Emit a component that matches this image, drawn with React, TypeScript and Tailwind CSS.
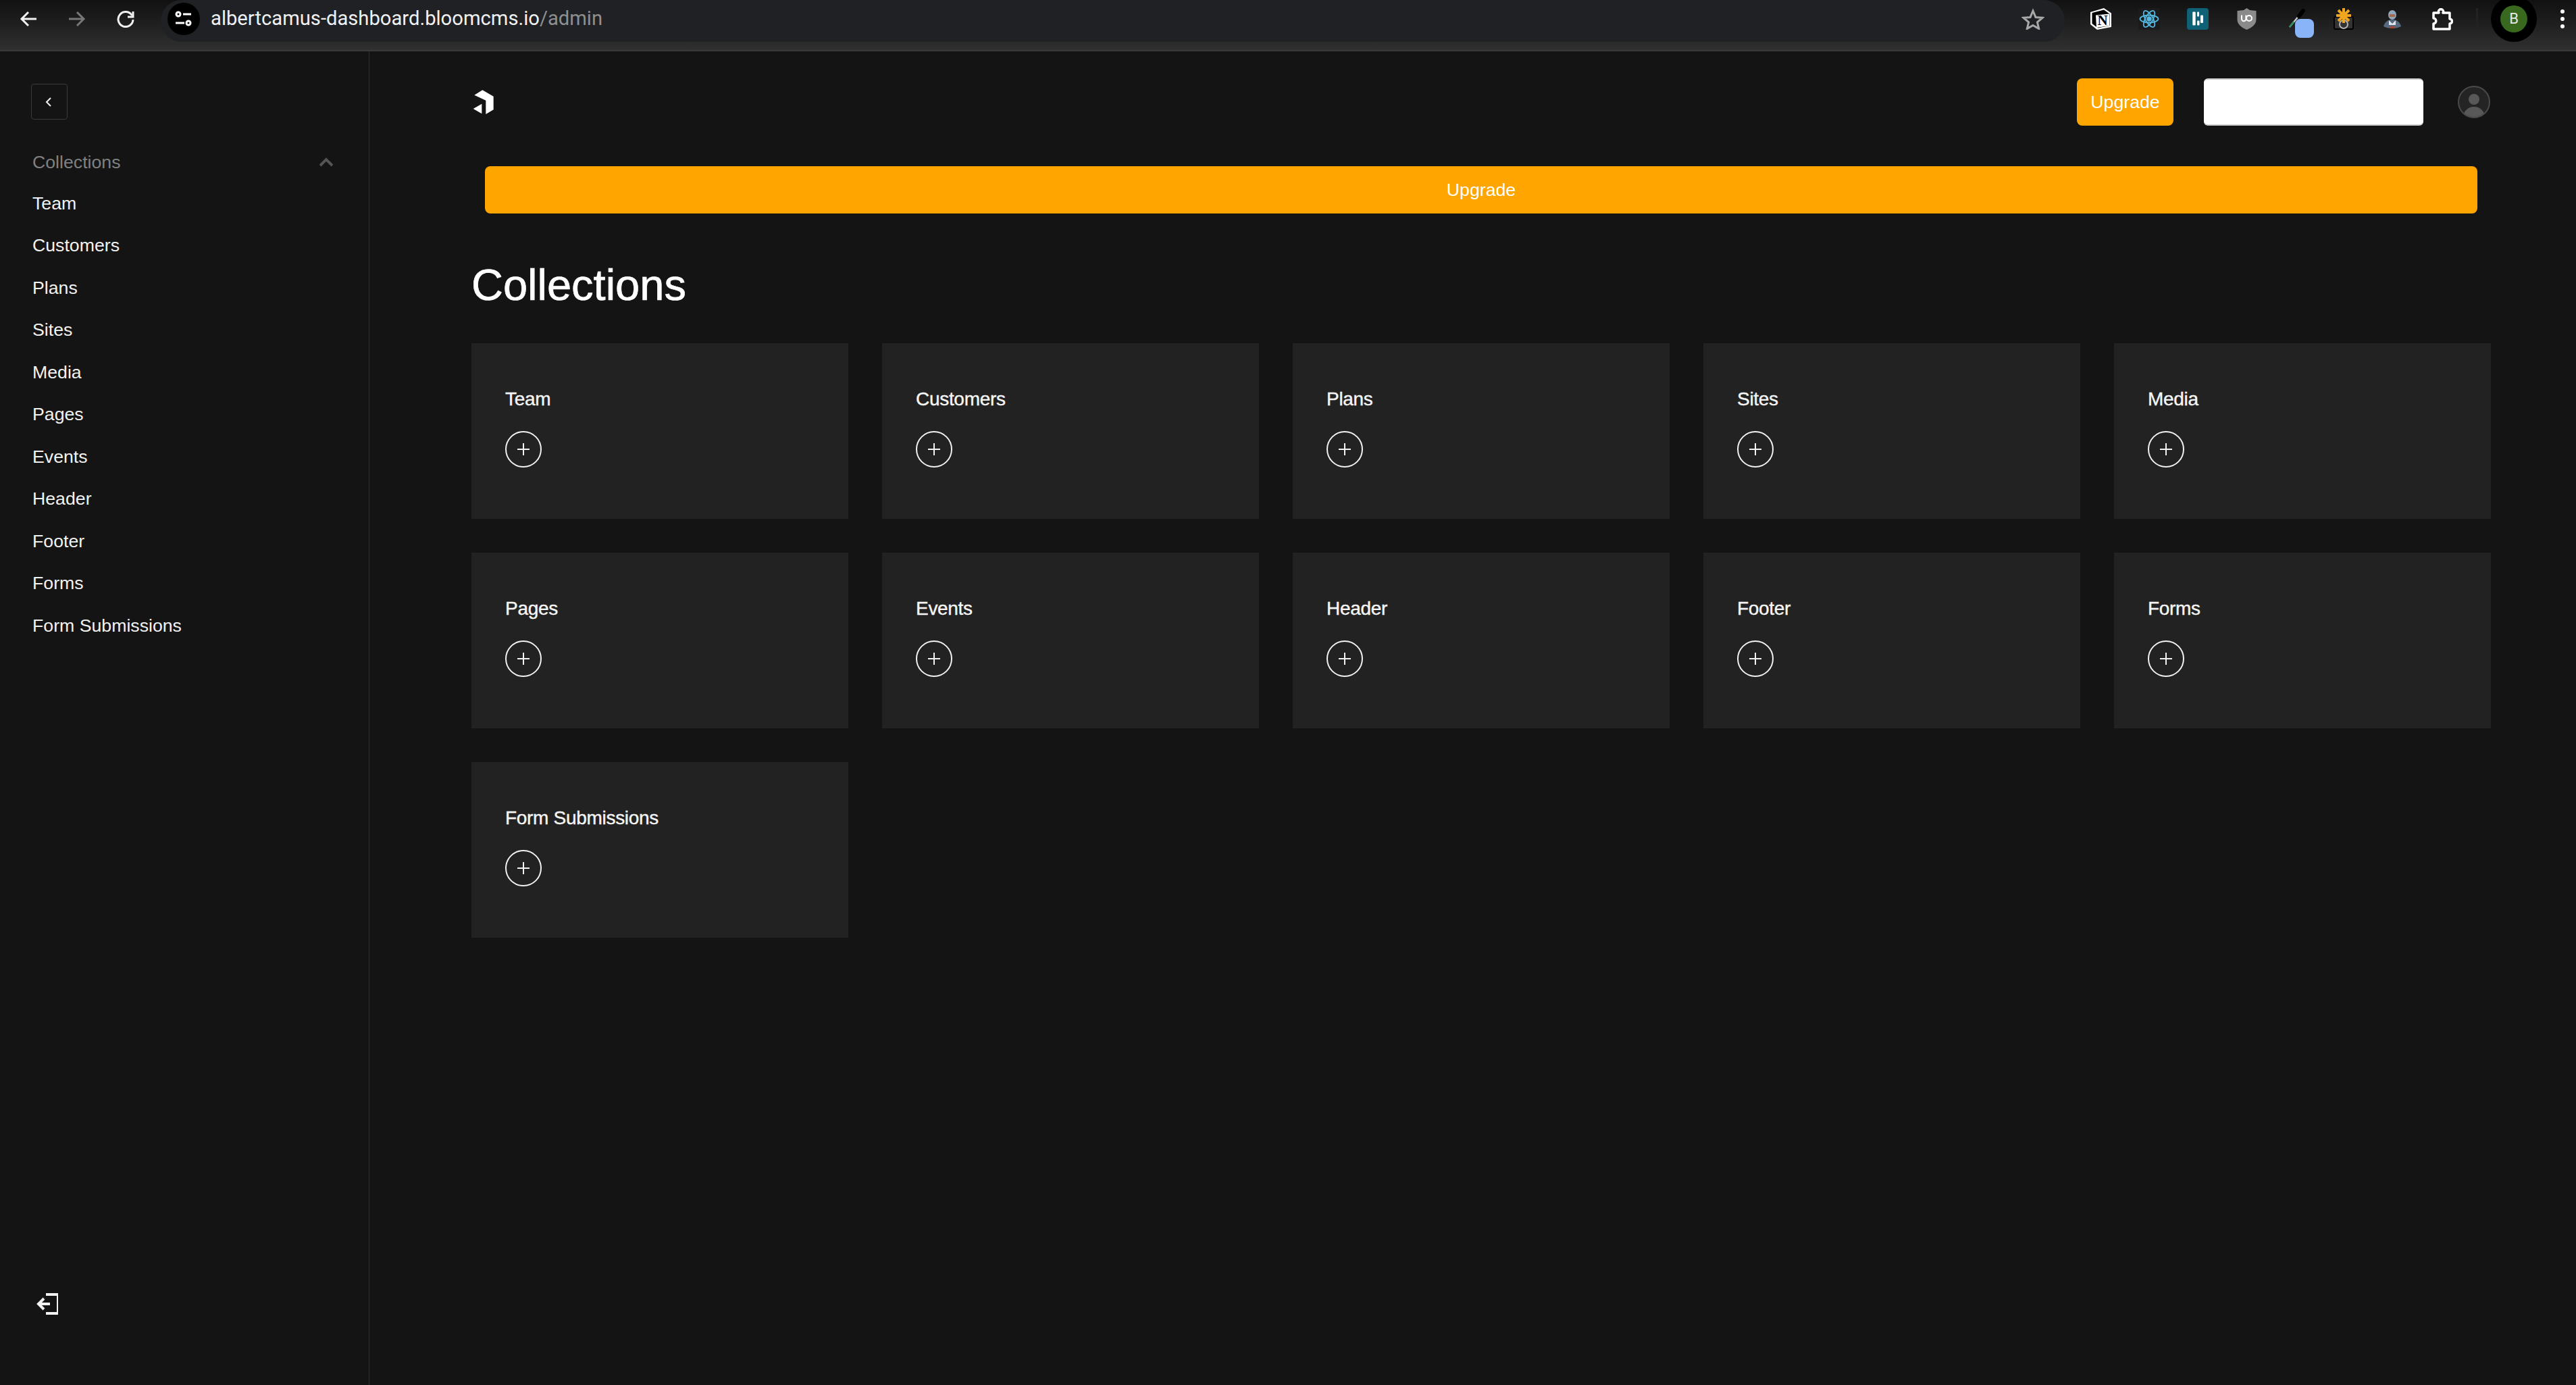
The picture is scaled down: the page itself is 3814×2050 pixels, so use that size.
import React from 'react';

const collections = ['Team', 'Customers', 'Plans', 'Sites', 'Media', 'Pages', 'Events', 'Header', 'Footer', 'Forms', 'Form Submissions'];

const BrowserBar = () => (
  <div className="flex h-[76px] items-start border-b-2 border-[#3a3a3a] bg-gradient-to-b from-[#111111] to-[#303030] font-['Roboto',sans-serif]">
    <div className="flex h-[62px] w-[238px] shrink-0 items-center pb-[6px]">
      <svg className="ml-[29px] h-[26px] w-[26px]" viewBox="0 0 26 26" fill="none" stroke="#f1f1f1" strokeWidth="3">
        <path d="M25 13H3M13 3 3 13l10 10" />
      </svg>
      <svg className="ml-[46px] h-[26px] w-[26px]" viewBox="0 0 26 26" fill="none" stroke="#777777" strokeWidth="3">
        <path d="M1 13h22M13 3l10 10-10 10" />
      </svg>
      <svg className="ml-[46px] h-[26px] w-[26px]" viewBox="0 0 26 26" fill="none" stroke="#f1f1f1" strokeWidth="3">
        <path d="M22.5 8A11 11 0 1 0 24 14" />
        <path d="M24 2v8h-8" strokeLinejoin="miter" />
      </svg>
    </div>
    <div className="flex h-[62px] w-[2819px] shrink-0 items-center rounded-full bg-[#1f2125] pb-[6px] pl-[10px] pr-[30px]">
      <div className="mt-[6px] flex h-[48px] w-[48px] -translate-y-[3px] items-center justify-center rounded-full bg-black">
        <svg className="h-[24px] w-[26px]" viewBox="0 0 26 24" fill="none" stroke="#ffffff" strokeWidth="3">
          <circle cx="5" cy="5" r="3" />
          <path d="M12 5h12M1 18h13" />
          <circle cx="20" cy="18" r="3" />
        </svg>
      </div>
      <div className="ml-[16px] text-[29.200px] leading-none text-[#f1f1f1]">
        albertcamus-dashboard.bloomcms.io<span className="text-[#8f8f8f]">/admin</span>
      </div>
      <svg className="ml-auto h-[32px] w-[34px]" viewBox="0 0 34 32" fill="none" stroke="#a8a8a8" strokeWidth="3">
        <path d="M17 4l4 9.5 10 .8-7.600 6.500 2.300 9.700L17 25.400 8.300 30.500l2.300-9.700L3 14.300l10-.8z" />
      </svg>
    </div>
    <div className="flex h-[62px] flex-1 items-center pb-[6px]">
      <svg className="ml-[38px] h-[32px] w-[31px]" viewBox="0 0 31 32">
        <path d="M0 6 20 0l11 7.500V28L10 32 0 24z" fill="#ffffff" />
        <path d="M2.500 7 20 2.500l8.500 6V26L11 29.500 2.500 23z" fill="#000000" />
        <path d="M8 10.500 28 8.500V26L9 29z" fill="#ffffff" />
        <text x="18" y="25" textAnchor="middle" fontFamily="'Liberation Serif', serif" fontWeight="700" fontSize="21" fill="#000000">N</text>
      </svg>
      <div className="ml-[40px] flex h-[32px] w-[32px] items-center justify-center bg-[#1b1b1b]">
        <svg className="h-[30px] w-[30px]" viewBox="0 0 30 30" fill="none" stroke="#53b8e0" strokeWidth="1.800">
          <circle cx="15" cy="15" r="2.800" fill="#53b8e0" />
          <ellipse cx="15" cy="15" rx="13.500" ry="5.500" />
          <ellipse cx="15" cy="15" rx="13.500" ry="5.500" transform="rotate(60 15 15)" />
          <ellipse cx="15" cy="15" rx="13.500" ry="5.500" transform="rotate(120 15 15)" />
        </svg>
      </div>
      <svg className="ml-[40px] h-[32px] w-[32px]" viewBox="0 0 32 32">
        <rect width="32" height="32" rx="4" fill="#0f6275" />
        <rect x="8.300" y="5.500" width="4.400" height="20" rx="1" fill="#ffffff" />
        <rect x="15" y="5.500" width="3" height="7" rx="1" fill="#ffffff" />
        <rect x="20" y="10.500" width="4" height="11.500" rx="1" fill="#ffffff" />
        <rect x="15" y="18.500" width="3.500" height="7" rx="1" fill="#ffffff" />
      </svg>
      <svg className="ml-[42px] h-[32px] w-[29px]" viewBox="0 0 29 32">
        <path d="M14.500 0 19 3l9.500 1v13c0 7-6.500 12-14 15C7 29 .5 24 .5 17V4L10 3z" fill="#8a8a8a" />
        <path d="M7 10.500V16a3.200 3.200 0 0 0 6.400 0v-5.500" fill="none" stroke="#ffffff" strokeWidth="2" />
        <circle cx="18" cy="15" r="4" fill="none" stroke="#ffffff" strokeWidth="2" />
      </svg>
      <div className="relative ml-[48px] h-[32px] w-[37px]">
        <svg className="h-[30px] w-[26px]" viewBox="0 0 26 30" fill="none">
          <path d="M15 11 1 28" stroke="#d8d8d8" strokeWidth="2" />
          <path d="M7 20 1 28" stroke="#2f8f5b" strokeWidth="2.500" />
          <path d="M21 4 15 12" stroke="#000000" strokeWidth="6" strokeLinecap="round" />
        </svg>
        <div className="absolute left-[9px] top-[16px] h-[28px] w-[28px] rounded-[8px] bg-[#8ab4f8]" />
      </div>
      <div className="relative ml-[29px] h-[32px] w-[30px]">
        <div className="absolute bottom-0 left-0 h-[20px] w-[30px] rounded-[3px] border-2 border-black bg-[#333333]" />
        <div className="absolute bottom-[1px] left-[8px] h-[14px] w-[14px] rounded-full border-2 border-[#b5b5b5]" />
        <svg className="absolute left-[4px] top-0 h-[22px] w-[22px]" viewBox="0 0 22 22" stroke="#f0a51e" strokeWidth="4">
          <path d="M11 0v22M0 11h22M3 3l16 16M3 19 19 3" />
        </svg>
      </div>
      <svg className="ml-[44px] h-[27px] w-[26px]" viewBox="0 0 26 27">
        <ellipse cx="13" cy="7" rx="6" ry="7" fill="#8fa6bc" />
        <rect x="9" y="6" width="8" height="4" fill="#a9694f" />
        <path d="M13 14c6 0 11 3 13 10-3 2-8 3-13 3S3 26 0 24c2-7 7-10 13-10z" fill="#56697f" />
        <path d="M8 15l5 5 5-5v7H8z" fill="#dfe4ea" />
        <rect x="9.500" y="24" width="7" height="3" fill="#a8472f" />
      </svg>
      <svg className="ml-[45px] h-[33px] w-[32px]" viewBox="0 0 32 33" fill="none" stroke="#ffffff" strokeWidth="3.500" strokeLinejoin="round">
        <path d="M3 7h8a3.500 3.500 0 1 1 6 0h10v9a3.500 3.500 0 0 1 0 7v8H3v-8c5 0 5-8 0-8z" />
      </svg>
      <div className="ml-[34px] h-[32px] w-[3px] bg-[#222222]" />
      <div className="ml-[19px] flex h-[68px] w-[68px] shrink-0 items-center justify-center rounded-full bg-black">
        <div className="flex h-[40px] w-[40px] items-center justify-center rounded-full bg-[#38691f] text-[22px] text-[#e8e8e8]">B</div>
      </div>
      <div className="ml-[35px] flex flex-col gap-[5px]">
        <div className="h-[6px] w-[6px] rounded-full bg-white" />
        <div className="h-[6px] w-[6px] rounded-full bg-white" />
        <div className="h-[6px] w-[6px] rounded-full bg-white" />
      </div>
    </div>
  </div>
);

const Sidebar = () => (
  <aside className="flex w-[547px] shrink-0 flex-col justify-between border-r border-[#2e2e2e] pb-[104px] pl-[48px] pr-[53px] pt-[48px]">
    <div>
      <button className="-ml-[2px] flex h-[53px] w-[54px] items-center justify-center rounded-[4px] border border-[#3a3a3a]">
        <svg className="h-[14px] w-[10px] -translate-x-px" viewBox="0 0 10 14" fill="none" stroke="#f2f2f2" strokeWidth="2">
          <path d="M8 1 2 7l6 6" />
        </svg>
      </button>
      <div className="mt-[48px] flex h-[30px] items-center justify-between">
        <span className="text-[#808080]">Collections</span>
        <svg className="h-[14px] w-[20px]" viewBox="0 0 20 14" fill="none" stroke="#555555" strokeWidth="4">
          <path d="M1 12 10 3l9 9" />
        </svg>
      </div>
      <nav className="mt-[15px] flex flex-col">
        {collections.map((name) => (
          <a key={name} className="flex h-[62.500px] items-center text-[#f2f2f2]">{name}</a>
        ))}
      </nav>
    </div>
    <svg className="ml-[6px] h-[32px] w-[32px]" viewBox="0 0 32 32" fill="none" stroke="#f2f2f2" strokeWidth="4">
      <path d="M14 2h18v28H14" />
      <path d="M20 16H3M11 8l-8 8 8 8" />
    </svg>
  </aside>
);

const CollectionCard = ({ name }: { name: string }) => (
  <div className="h-[260px] bg-[#222222] pl-[50px] pt-[67px]">
    <div className="text-[28px] leading-[32px] tracking-[-0.3px] text-[#f5f5f5] [-webkit-text-stroke:0.4px_#f5f5f5]">{name}</div>
    <button className="mt-[31px] flex h-[54px] w-[54px] items-center justify-center rounded-full border-2 border-[#f2f2f2]">
      <svg className="h-[18px] w-[18px]" viewBox="0 0 18 18" stroke="#f2f2f2" strokeWidth="2">
        <path d="M9 0v18M0 9h18" />
      </svg>
    </button>
  </div>
);

export default function App() {
  return (
    <div className="flex h-[2050px] w-[3814px] flex-col overflow-hidden bg-[#141414] font-['Liberation_Sans',sans-serif] text-[26.700px] leading-none">
      <BrowserBar />
      <div className="flex flex-1">
        <Sidebar />
        <main className="flex-1 pl-[151px] pr-[126px] pt-[40px]">
          <header className="flex h-[70px] items-center">
            <svg className="ml-[2px] h-[38px] w-[32px]" viewBox="120 95 96 114" fill="#ffffff">
              <path d="M127 121 163 99l49 28v59l-34 20v-61z" />
              <path d="M122 182l38-22v44z" />
            </svg>
            <button className="ml-auto flex h-[70px] w-[143px] items-center justify-center rounded-[8px] bg-[#ffa500] text-white">Upgrade</button>
            <div className="ml-[45px] h-[70px] w-[325px] rounded-[6px] border-y-2 border-[#cccccc] bg-white" />
            <svg className="ml-[51px] mr-px h-[48px] w-[48px]" viewBox="0 0 48 48" fill="none">
              <clipPath id="avatar-clip">
                <circle cx="24" cy="24" r="23" />
              </clipPath>
              <circle cx="24" cy="24" r="23" fill="#242424" />
              <g clipPath="url(#avatar-clip)" fill="#585858">
                <circle cx="24" cy="20" r="8" />
                <ellipse cx="24" cy="46" rx="16" ry="15" />
              </g>
              <circle cx="24" cy="24" r="23" stroke="#4a4a4a" strokeWidth="2" />
            </svg>
          </header>
          <button className="mx-[20px] mt-[60px] flex h-[70px] w-[2950px] items-center justify-center rounded-[8px] bg-[#ffa500] text-white">Upgrade</button>
          <h1 className="mt-[74px] text-[65px] leading-[64px] text-white [-webkit-text-stroke:0.7px_#ffffff]">Collections</h1>
          <div className="mt-[54px] grid grid-cols-5 gap-[50px]">
            {collections.map((name) => (
              <CollectionCard key={name} name={name} />
            ))}
          </div>
        </main>
      </div>
    </div>
  );
}
